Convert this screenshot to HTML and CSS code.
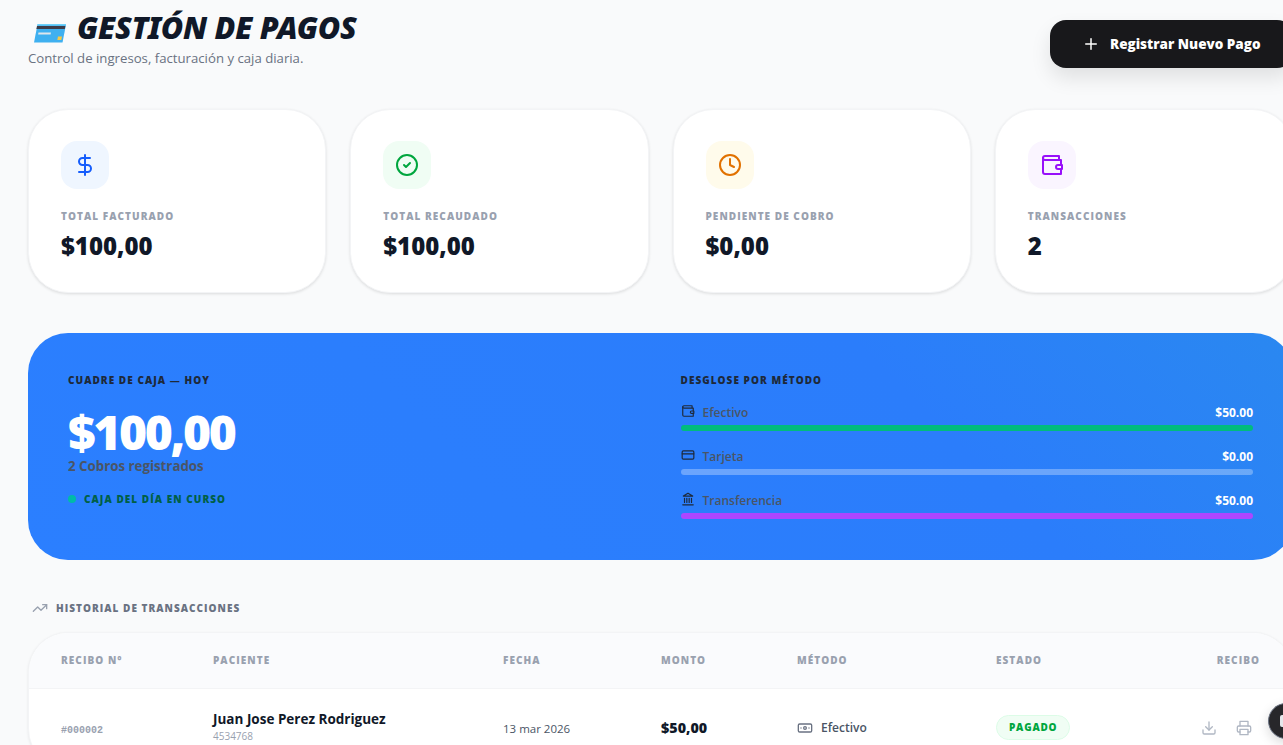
FILE: index.html
```html
<!DOCTYPE html>
<html lang="es">
<head>
    <meta charset="UTF-8">
    <meta name="viewport" content="width=device-width, initial-scale=1.0">
    <title>Gestión de Pagos</title>
    <link rel="stylesheet" href="styles.css">
</head>
<body>

    <main class="page">
        <header class="page-head">
            <div>
                <h1 class="page-title">
                    <svg class="title-card" viewBox="0 0 34 20" aria-hidden="true">
                        <path d="M4.5 1.5 H33 L29.5 19.5 H1 Z" fill="#3fb0f0"/>
                        <path d="M4.5 1 H33 L32.7 2.5 H4.2 Z" fill="#6fd0f8"/>
                        <path d="M4 3 H32.4 L31.8 6 H3.4 Z" fill="#3d3d4a"/>
                        <path d="M5.5 9.5 H18 L17.6 11.5 H5.1 Z" fill="#dfe6ec"/>
                        <path d="M25 13.5 H29 L28.3 17 H24.3 Z" fill="#f6c945"/>
                    </svg>
                    <span>GESTIÓN DE PAGOS</span>
                </h1>
                <p class="page-sub">Control de ingresos, facturación y caja diaria.</p>
            </div>
            <button class="new-btn" type="button">
                <svg class="ico-plus" viewBox="0 0 24 24"><path d="M5 12h14"/><path d="M12 5v14"/></svg>
                Registrar Nuevo Pago
            </button>
        </header>

        <section class="stats">
            <div class="stat">
                <div class="stat-icon bg-blue">
                    <svg class="ico" viewBox="0 0 24 24"><path d="M12 2v20"/><path d="M17 5H9.5a3.5 3.5 0 0 0 0 7h5a3.5 3.5 0 0 1 0 7H6"/></svg>
                </div>
                <div class="stat-label">TOTAL FACTURADO</div>
                <div class="stat-value">$100,00</div>
            </div>
            <div class="stat">
                <div class="stat-icon bg-green">
                    <svg class="ico" viewBox="0 0 24 24"><circle cx="12" cy="12" r="10"/><path d="m9 12 2 2 4-4"/></svg>
                </div>
                <div class="stat-label">TOTAL RECAUDADO</div>
                <div class="stat-value">$100,00</div>
            </div>
            <div class="stat">
                <div class="stat-icon bg-amber">
                    <svg class="ico" viewBox="0 0 24 24"><circle cx="12" cy="12" r="10"/><polyline points="12 6 12 12 16 14"/></svg>
                </div>
                <div class="stat-label">PENDIENTE DE COBRO</div>
                <div class="stat-value">$0,00</div>
            </div>
            <div class="stat">
                <div class="stat-icon bg-purple">
                    <svg class="ico" viewBox="0 0 24 24"><path d="M21 12V7H5a2 2 0 0 1 0-4h14v4"/><path d="M3 5v14a2 2 0 0 0 2 2h16v-5"/><path d="M18 12a2 2 0 0 0 0 4h4v-4Z"/></svg>
                </div>
                <div class="stat-label">TRANSACCIONES</div>
                <div class="stat-value">2</div>
            </div>
        </section>

        <section class="cash">
            <div class="cash-left">
                <div class="cash-title">CUADRE DE CAJA — HOY</div>
                <div class="cash-total">$100,00</div>
                <div class="cash-count">2 Cobros registrados</div>
                <div class="cash-status"><span class="dot"></span>CAJA DEL DÍA EN CURSO</div>
            </div>
            <div class="cash-right">
                <div class="cash-title">DESGLOSE POR MÉTODO</div>
                <div class="method">
                    <div class="method-row">
                        <span class="method-name">
                            <svg class="ico-sm" viewBox="0 0 24 24"><path d="M21 12V7H5a2 2 0 0 1 0-4h14v4"/><path d="M3 5v14a2 2 0 0 0 2 2h16v-5"/><path d="M18 12a2 2 0 0 0 0 4h4v-4Z"/></svg>
                            Efectivo
                        </span>
                        <span class="method-amount">$50.00</span>
                    </div>
                    <div class="bar"><div class="bar-fill fill-green"></div></div>
                </div>
                <div class="method">
                    <div class="method-row">
                        <span class="method-name">
                            <svg class="ico-sm" viewBox="0 0 24 24"><rect width="20" height="14" x="2" y="5" rx="2"/><line x1="2" x2="22" y1="10" y2="10"/></svg>
                            Tarjeta
                        </span>
                        <span class="method-amount">$0.00</span>
                    </div>
                    <div class="bar"></div>
                </div>
                <div class="method">
                    <div class="method-row">
                        <span class="method-name">
                            <svg class="ico-sm" viewBox="0 0 24 24"><line x1="3" x2="21" y1="22" y2="22"/><line x1="6" x2="6" y1="18" y2="11"/><line x1="10" x2="10" y1="18" y2="11"/><line x1="14" x2="14" y1="18" y2="11"/><line x1="18" x2="18" y1="18" y2="11"/><polygon points="12 2 20 7 4 7"/></svg>
                            Transferencia
                        </span>
                        <span class="method-amount">$50.00</span>
                    </div>
                    <div class="bar"><div class="bar-fill fill-purple"></div></div>
                </div>
            </div>
        </section>

        <h2 class="history-title">
            <svg class="ico-trend" viewBox="0 0 24 24"><polyline points="22 7 13.5 15.5 8.5 10.5 2 17"/><polyline points="16 7 22 7 22 13"/></svg>
            HISTORIAL DE TRANSACCIONES
        </h2>

        <div class="table-card">
            <table class="pay-table">
                <thead>
                    <tr>
                        <th class="col-recibo">RECIBO N°</th>
                        <th class="col-paciente">PACIENTE</th>
                        <th class="col-fecha">FECHA</th>
                        <th class="col-monto">MONTO</th>
                        <th class="col-metodo">MÉTODO</th>
                        <th class="col-estado">ESTADO</th>
                        <th class="col-accion">RECIBO</th>
                    </tr>
                </thead>
                <tbody>
                    <tr>
                        <td class="receipt-no">#000002</td>
                        <td class="patient-cell">
                            <div class="patient">Juan Jose Perez Rodriguez</div>
                            <div class="patient-id">4534768</div>
                        </td>
                        <td class="date">13 mar 2026</td>
                        <td class="amount">$50,00</td>
                        <td class="method-cell">
                            <span class="pay-method">
                                <svg class="ico-cash" viewBox="0 0 24 24"><rect width="20" height="12" x="2" y="6" rx="2"/><circle cx="12" cy="12" r="2"/><path d="M6 12h.01M18 12h.01"/></svg>
                                Efectivo
                            </span>
                        </td>
                        <td class="badge-cell"><span class="badge">PAGADO</span></td>
                        <td class="actions">
                            <svg class="ico-act" viewBox="0 0 24 24"><path d="M21 15v4a2 2 0 0 1-2 2H5a2 2 0 0 1-2-2v-4"/><polyline points="7 10 12 15 17 10"/><line x1="12" x2="12" y1="15" y2="3"/></svg>
                            <svg class="ico-act" viewBox="0 0 24 24"><polyline points="6 9 6 2 18 2 18 9"/><path d="M6 18H4a2 2 0 0 1-2-2v-5a2 2 0 0 1 2-2h16a2 2 0 0 1 2 2v5a2 2 0 0 1-2 2h-2"/><rect width="12" height="8" x="6" y="14"/></svg>
                        </td>
                    </tr>
                </tbody>
            </table>
        </div>
    </main>

    <div class="float-btn"><span class="float-square"></span></div>

</body>
</html>
```

FILE: styles.css
```css
html, body {
    height: 100%;
}

body {
    margin: 0;
    overflow: hidden;
    background-color: #f9fafb;
    font-family: 'Open Sans', 'Noto Sans', sans-serif;
    color: #101828;
}

svg {
    fill: none;
    stroke: currentColor;
    stroke-linecap: round;
    stroke-linejoin: round;
    flex-shrink: 0;
}

.page {
    width: 1265px;
    padding: 0 0 0 28px;
}

/* header */
.page-head {
    display: flex;
    justify-content: space-between;
    align-items: flex-start;
    height: 109px;
    padding-top: 9px;
    box-sizing: border-box;
}

.page-title {
    display: flex;
    align-items: flex-start;
    gap: 10px;
    margin: 0;
    font-family: 'Noto Sans', sans-serif;
    font-size: 30.6px;
    line-height: 36px;
    font-weight: 900;
    font-style: italic;
    color: #101828;
    letter-spacing: -0.3px;
}

.title-card {
    width: 34px;
    height: 20px;
    margin: 14px 0 0 5px;
    stroke: none;
}

.page-sub {
    margin: 4px 0 0;
    font-size: 13.2px;
    line-height: 18px;
    color: #6a7282;
}

.new-btn {
    display: flex;
    align-items: center;
    gap: 10px;
    height: 48px;
    width: 243px;
    margin-top: 11px;
    padding: 0 32px;
    border: none;
    border-radius: 16px;
    background-color: #18181b;
    color: #fff;
    font-family: inherit;
    font-size: 13.5px;
    font-weight: 800;
    white-space: nowrap;
    box-shadow: 0 10px 20px rgba(0, 0, 0, 0.1);
}

.ico-plus {
    width: 18px;
    height: 18px;
    stroke-width: 2;
}

/* stat cards */
.stats {
    display: grid;
    grid-template-columns: repeat(4, 1fr);
    gap: 24px;
}

.stat {
    height: 184px;
    box-sizing: border-box;
    padding: 31px 32px;
    background-color: #fff;
    border: 1px solid #f3f4f6;
    border-radius: 40px;
    box-shadow: 0 1px 3px rgba(0, 0, 0, 0.12);
}

.stat-icon {
    display: flex;
    align-items: center;
    justify-content: center;
    width: 48px;
    height: 48px;
    border-radius: 16px;
}

.ico {
    width: 24px;
    height: 24px;
    stroke-width: 2;
}

.bg-blue { background-color: #eff6ff; color: #155dfc; }
.bg-green { background-color: #f0fdf4; color: #00a63e; }
.bg-amber { background-color: #fffbeb; color: #e17100; }
.bg-purple { background-color: #faf5ff; color: #9810fa; }

.stat-label {
    margin-top: 20px;
    font-size: 10px;
    line-height: 14px;
    font-weight: 800;
    letter-spacing: 1.05px;
    color: #99a1af;
}

.stat-value {
    margin-top: 7px;
    font-size: 24px;
    line-height: 32px;
    font-weight: 800;
    color: #101828;
}

/* cash panel */
.cash {
    display: grid;
    grid-template-columns: 1fr 1fr;
    gap: 40px;
    height: 227px;
    box-sizing: border-box;
    margin-top: 40px;
    padding: 40px;
    border-radius: 40px;
    background: linear-gradient(225deg, #2a88f0 0%, #2b7dfb 30%, #2b7fff 100%);
}

.cash-title {
    font-size: 10px;
    line-height: 14px;
    font-weight: 800;
    letter-spacing: 1.05px;
    color: #1e2939;
}

.cash-total {
    margin-top: 21px;
    font-size: 48px;
    line-height: 48px;
    font-weight: 800;
    letter-spacing: -2.4px;
    color: #fff;
}

.cash-count {
    font-size: 13.3px;
    line-height: 20px;
    font-weight: 700;
    color: #4a5565;
}

.cash-status {
    display: flex;
    align-items: center;
    gap: 8px;
    margin-top: 16px;
    font-size: 10px;
    line-height: 14px;
    font-weight: 800;
    letter-spacing: 1.05px;
    color: #006045;
}

.dot {
    flex: none;
    width: 8px;
    height: 8px;
    border-radius: 50%;
    background-color: #00bba7;
}

.method {
    margin-top: 16px;
}

.method-row {
    display: flex;
    justify-content: space-between;
    align-items: center;
    height: 18px;
    margin-bottom: 4px;
    font-size: 12px;
    font-weight: 600;
}

.method-name {
    display: flex;
    align-items: center;
    gap: 8px;
    color: #4a5565;
}

.ico-sm {
    width: 14px;
    height: 14px;
    margin-top: -2px;
    stroke-width: 2;
    color: #1e2939;
}

.method-amount {
    font-weight: 700;
    color: #fff;
}

.bar {
    height: 6px;
    border-radius: 3px;
    background-color: rgba(255, 255, 255, 0.3);
    overflow: hidden;
}

.bar-fill {
    height: 100%;
    width: 100%;
}

.fill-green { background-color: #00bc7d; }
.fill-purple { background-color: #ad46ff; }

/* history */
.history-title {
    display: flex;
    align-items: center;
    gap: 8px;
    height: 16px;
    margin: 40px 0 16px 4px;
    font-size: 10px;
    font-weight: 800;
    letter-spacing: 1.03px;
    color: #6a7282;
}

.ico-trend {
    width: 16px;
    height: 16px;
    stroke-width: 2;
    color: #99a1af;
}

.table-card {
    background-color: #fff;
    border: 1px solid #f3f4f6;
    border-radius: 40px;
    box-shadow: 0 1px 3px rgba(0, 0, 0, 0.08);
    overflow: hidden;
}

.pay-table {
    width: 100%;
    border-collapse: collapse;
    table-layout: fixed;
}

.pay-table th,
.pay-table td {
    box-sizing: border-box;
}

.pay-table th {
    height: 55px;
    padding: 0 0 1px 32px;
    background-color: #fafbfd;
    border-bottom: 1px solid #f3f4f6;
    text-align: left;
    font-size: 10px;
    font-weight: 800;
    letter-spacing: 1.05px;
    color: #99a1af;
}

.pay-table td {
    height: 80px;
    padding: 0 0 0 32px;
    font-size: 12px;
    vertical-align: middle;
}

.col-recibo { width: 152px; }
.col-paciente { width: 290px; }
.col-fecha { width: 158px; }
.col-monto { width: 136px; }
.col-metodo { width: 199px; }
.col-estado { width: 185px; }

.pay-table .col-accion {
    padding-right: 32px;
    text-align: right;
}

.pay-table .receipt-no {
    padding-top: 4px;
    font-family: 'Liberation Mono', monospace;
    font-size: 10px;
    font-weight: 700;
    color: #99a1af;
}

.pay-table .patient-cell {
    padding-bottom: 2px;
}

.patient {
    margin-bottom: 2px;
    font-size: 13.5px;
    line-height: 17px;
    font-weight: 700;
    color: #101828;
}

.patient-id {
    font-size: 10px;
    line-height: 13px;
    color: #99a1af;
}

.pay-table .date {
    font-size: 11.5px;
    color: #4a5565;
}

.pay-table .amount {
    padding-bottom: 2px;
    font-size: 14.3px;
    font-weight: 800;
    color: #101828;
}

.pay-table .method-cell {
    padding-top: 2px;
}

.pay-method {
    display: inline-flex;
    align-items: center;
    gap: 8px;
    font-weight: 600;
    color: #4a5565;
}

.ico-cash {
    width: 16px;
    height: 16px;
    stroke-width: 2;
    color: #6a7282;
}

.pay-table .badge-cell {
    padding-bottom: 2px;
}

.badge {
    display: inline-block;
    padding: 4px 12px;
    border: 1px solid #dcfce7;
    border-radius: 999px;
    background-color: #f0fdf4;
    color: #00a63e;
    font-size: 10px;
    line-height: 15px;
    font-weight: 800;
    letter-spacing: 0.8px;
}

.pay-table .actions {
    padding-right: 40px;
    padding-bottom: 2px;
    text-align: right;
    white-space: nowrap;
}

.ico-act {
    width: 16px;
    height: 16px;
    margin-left: 16px;
    stroke-width: 2;
    color: #b0b7c3;
    vertical-align: middle;
}

/* floating button over the table */
.float-btn {
    position: fixed;
    left: 1268px;
    top: 703px;
    display: flex;
    align-items: center;
    justify-content: center;
    width: 36px;
    height: 36px;
    box-sizing: border-box;
    border: 1px solid #6a7282;
    border-radius: 50%;
    background-color: #27272a;
    box-shadow: 0 4px 12px rgba(0, 0, 0, 0.15);
}

.float-square {
    width: 12px;
    height: 12px;
    border-radius: 2px;
    background-color: #e5e7eb;
}
```
